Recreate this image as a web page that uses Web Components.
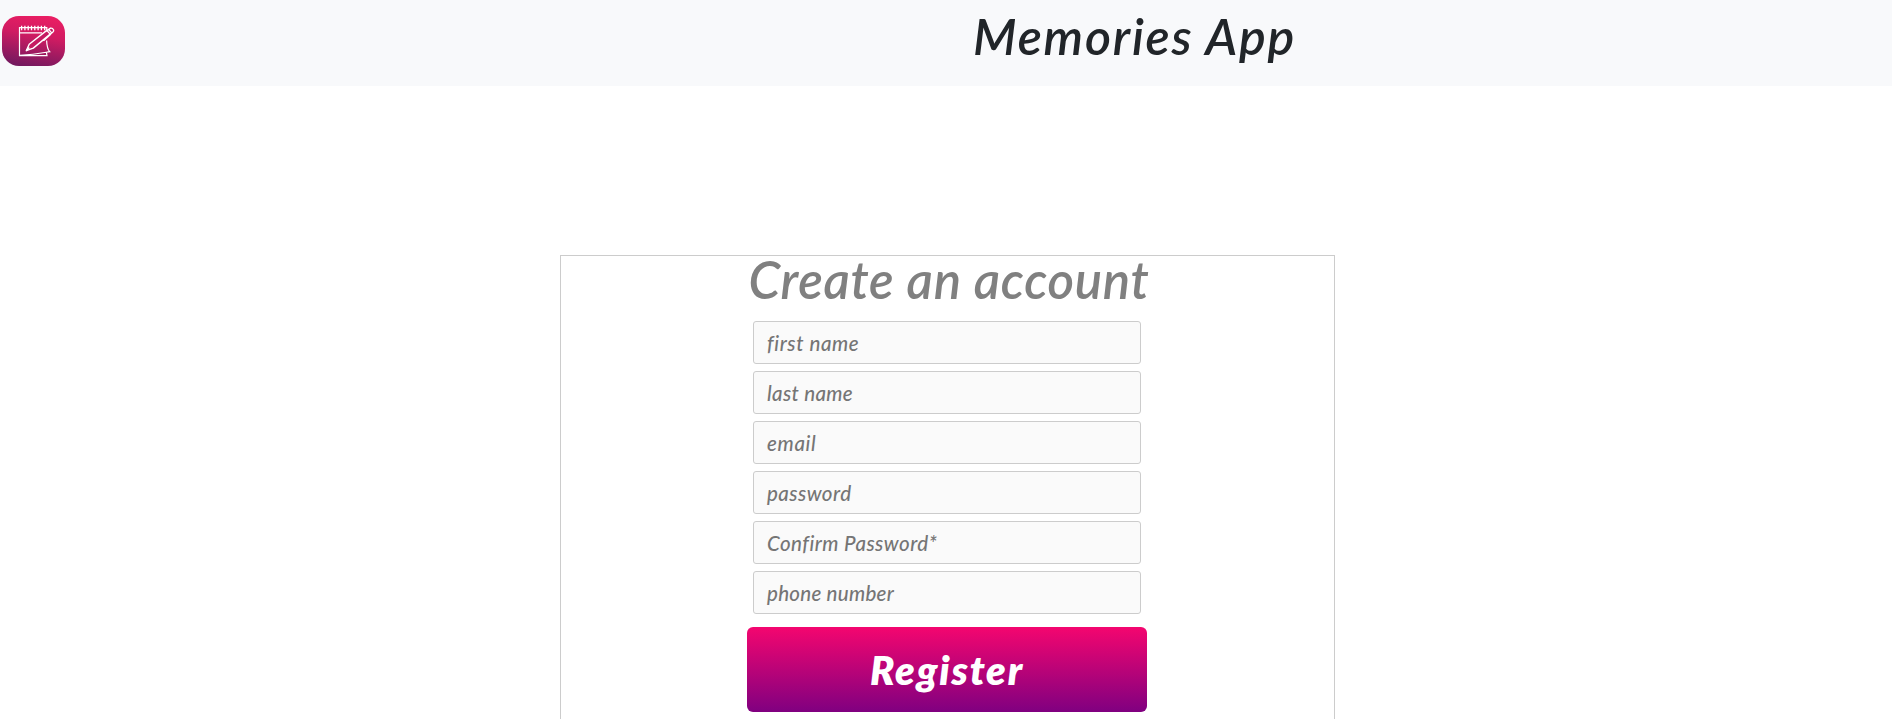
<!DOCTYPE html>
<html lang="en">
<head>
<meta charset="utf-8">
<title>Memories App</title>
<style>
html, body { margin: 0; height: 719px; overflow: hidden; background: #fff; }
body { font-family: Lato, "Open Sans", sans-serif; font-style: italic; color: #212529; }
</style>
</head>
<body>
<memories-app></memories-app>
<script>
const define = (name, html, setup) => customElements.define(name, class extends HTMLElement {
  constructor() {
    super();
    const t = document.createElement('template');
    t.innerHTML = html;
    this.attachShadow({ mode: 'open' }).append(t.content.cloneNode(true));
  }
  connectedCallback() { if (setup) setup(this); }
});

// Text spread evenly over the width given in its "fit" attribute.
define('fit-text', `
<style>
:host { display: inline-block; white-space: nowrap; }
span { display: inline-block; }
</style>
<span><slot></slot></span>`, el => {
  const width = parseFloat(el.getAttribute('fit'));
  const span = el.shadowRoot.querySelector('span');
  const count = el.textContent.length;
  span.style.letterSpacing = (width - span.getBoundingClientRect().width) / count + 'px';
  el.style.width = width + 'px';
});

define('app-logo', `
<style>:host { display: block; width: 63px; height: 50px; } svg { display: block; }</style>
<svg width="63" height="50" viewBox="0 0 63 50" fill="none" stroke="#fff">
  <defs><linearGradient id="g" x1=".62" y1="0" x2=".38" y2="1">
    <stop offset="0" stop-color="#e91e63"/><stop offset=".38" stop-color="#d01b62"/><stop offset="1" stop-color="#75195f"/>
  </linearGradient></defs>
  <rect width="63" height="50" rx="17" fill="url(#g)" stroke="none"/>
  <path d="M44.8 15V11.7H17.5V39.7H45L44.4 36.3M17.5 16.8H40M44.6 24.5C44.8 29 45.2 33 47.7 35.7C43 36.4 34 38.4 18 39.4" stroke-width="1.2"/>
  <path d="M19.6 9.8v4.4M22.9 9.8v4.4M26.2 9.8v4.4M29.5 9.8v4.4M32.8 9.8v4.4M36.1 9.8v4.4M39.4 9.8v4.4M42.7 9.8v4.4" stroke-width="1.3"/>
  <path d="M24.3 34.7L27.2 28.2L44.8 14.4L48.2 18.1L31.3 32.1ZM45.3 14.4L48.5 12.2Q50.5 11.8 51.6 14Q52 15.2 50.7 16.2L48.2 18.1M46.7 13.5L49.7 16.9M49 18L41.5 24.8" fill="#c51b62" stroke-width="1.4" stroke-linejoin="round"/>
  <path d="M24.3 34.7l3-3.2" stroke-width="1.4"/>
</svg>`);

define('app-header', `
<style>
:host { display: flex; box-sizing: border-box; height: 86px; background: #f8f9fb; padding: 16px 0 0 2px; justify-content: space-between; align-items: flex-start; }
h1 { margin: -10px 596px 0 0; font: italic 600 50px/60px Lato, sans-serif; }
</style>
<app-logo></app-logo>
<h1><slot></slot></h1>`);

define('form-field', `
<style>
:host { display: flex; align-items: center; box-sizing: border-box; width: 388px; height: 43px; padding: 0 13px; border: 1px solid #ccc; border-radius: 3px; background: #fafafa; color: #757575; font: italic 500 20.5px/26px Lato, sans-serif; }
</style>
<slot></slot>`);

define('submit-button', `
<style>
:host { display: block; width: 400px; }
button { display: flex; width: 100%; height: 85px; padding: 1px 0 0; align-items: center; justify-content: center; border: 0; border-radius: 6px; background: linear-gradient(#f4066f, #800080); color: #fff; font: italic 800 40px/50px Lato, sans-serif; }
</style>
<button type="button"><slot></slot></button>`);

define('register-card', `
<style>
:host { display: flex; flex-direction: column; align-items: center; box-sizing: border-box; width: 775px; height: 520px; margin: 169px auto 0 560px; padding-right: 1px; border: 1px solid #ccc; background: #fff; }
h2 { margin: -7px 0 11px 4px; color: #808080; font: italic 600 51px/61px Lato, sans-serif; }
.fields { display: flex; flex-direction: column; gap: 7px; }
submit-button { margin-top: 13px; }
</style>
<h2><fit-text fit="401">Create an account</fit-text></h2>
<div class="fields">
  <form-field><fit-text fit="92">first name</fit-text></form-field>
  <form-field><fit-text fit="86">last name</fit-text></form-field>
  <form-field><fit-text fit="49.5">email</fit-text></form-field>
  <form-field><fit-text fit="84.5">password</fit-text></form-field>
  <form-field><fit-text fit="170">Confirm Password*</fit-text></form-field>
  <form-field><fit-text fit="127">phone number</fit-text></form-field>
</div>
<submit-button><fit-text fit="154">Register</fit-text></submit-button>`);

define('memories-app', `
<style>:host { display: block; height: 719px; overflow: hidden; }</style>
<app-header><fit-text fit="323">Memories App</fit-text></app-header>
<register-card></register-card>`);
</script>
</body>
</html>
